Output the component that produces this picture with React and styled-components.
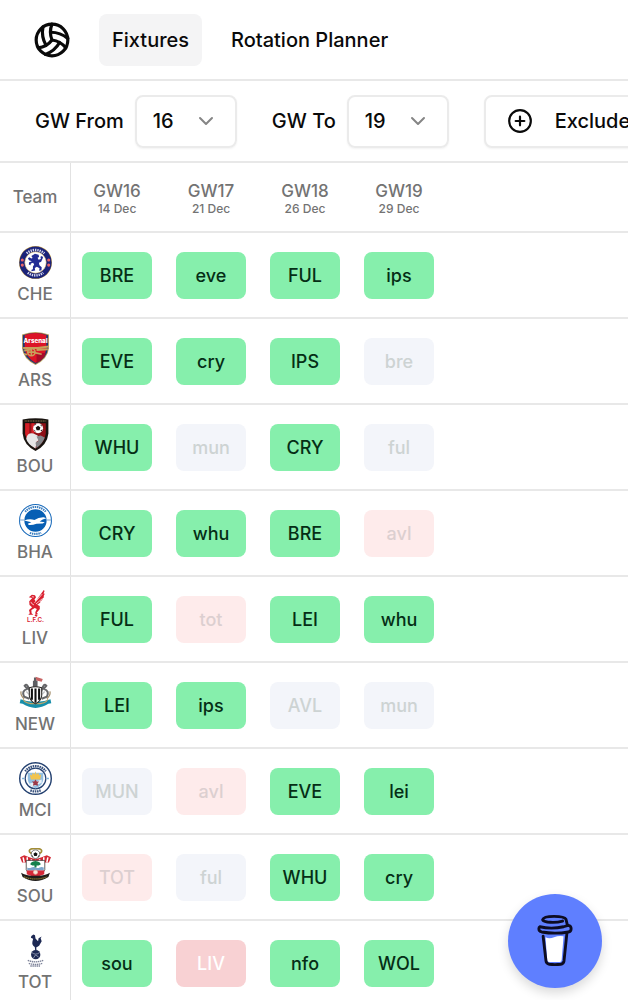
import styled, { createGlobalStyle } from "styled-components";
import { ChevronDown, CirclePlus, Volleyball } from "lucide-react";

const gameweeks = [
  { name: "GW16", date: "14 Dec" },
  { name: "GW17", date: "21 Dec" },
  { name: "GW18", date: "26 Dec" },
  { name: "GW19", date: "29 Dec" },
];

function ChelseaCrest() {
  return (
    <>
      <circle cx="16" cy="16" r="16" fill="#c9a24b" />
      <circle cx="16" cy="16" r="15.6" fill="#1b2379" />
      <circle cx="16" cy="16" r="10.4" fill="#fff" stroke="#c9a24b" strokeWidth="0.5" />
      <path
        d="M7.500 7.200a12.500 12.500 0 0 1 17 0M8.500 26a12.500 12.500 0 0 0 15 0"
        fill="none"
        stroke="#d7d9ee"
        strokeWidth="2.400"
        strokeDasharray="1.300 0.9"
      />
      <g fill="#e8656a">
        <circle cx="3.200" cy="13.500" r="1.500" />
        <circle cx="3.200" cy="18.500" r="1.500" />
        <circle cx="28.800" cy="13.500" r="1.500" />
        <circle cx="28.800" cy="18.500" r="1.500" />
      </g>
      <path
        d="M15.500 7.500l3.500 1 .5 2.200-1.500.6 1 2 2.200-.8-.4-2 1.500-.8 1 1.500-1.800 4-2.200 1 .5 2.500 2.200 1.800-.2 3-2.300.5.4-2.500-2.600-1.500-2 1.400.4 2.300-3.700.9.2-1.500 1.300-.6v-2.500l1.200-2-1-1.800-2.200.8-.4 1.700-1.600-.8.3-2.200 2.700-1-2.800-.8-1-2 1.300-1 2 1.300 1.200-.5-1.200-2z"
        fill="#222c94"
      />
    </>
  );
}

function ArsenalCrest() {
  return (
    <>
      <path d="M3 2.500Q16-2.500 29 2.500V16Q28 26 16 32 4 26 3 16z" fill="#b79755" />
      <path d="M3.800 3.200Q16-1.500 28.200 3.200V16Q27 25.500 16 31 5 25.500 3.800 16z" fill="#173a78" />
      <path d="M5.500 3Q16-1 26.500 3V16q-1 8.500-10.500 14Q6.500 24.500 5.500 16z" fill="#dc1426" />
      <path d="M17 21v9q8-4 9-10z" fill="#a80b28" />
      <text x="16" y="10.500" textAnchor="middle" fontSize="6" fontWeight="800" fill="#fff">
        Arsenal
      </text>
      <g fill="none" stroke="#c7a15b" strokeWidth="1.500">
        <path d="M4 15.500h14l11-1.500M17 17.500l11-.8M5 18l7-1" strokeWidth="2" />
        <circle cx="12" cy="19.500" r="3.600" />
        <path d="M12 16v7M8.500 19.500h7M15 20l7 1.500M5 21l3 1" />
      </g>
    </>
  );
}

function BournemouthCrest() {
  return (
    <>
      <path d="M3.500 1.500Q16-.8 28.500 1.500V15q-1 11-12.500 17Q4.500 26 3.500 15z" fill="#18130f" />
      <path d="M6 5h20v10q-1 9-10 14.500Q7 24 6 15z" fill="#8e1017" />
      <path d="M6 5h4v16q-4-3-4-6zM12 5h3v10h-3z" fill="#d32028" />
      <path d="M7 20q1-6 7-5l4 2 2 4-3 2-1 6.500Q8 25 7 20z" fill="#e6e6e7" />
      <path d="M17 18l4-1 4 2q-2 6-8 10l-1-5 3-2z" fill="#85878b" />
      <circle cx="18.500" cy="10" r="4.800" fill="#fff" />
      <path d="M18.500 7.500l2.300 1.700-.9 2.700h-2.800l-.9-2.700zM14.500 7.500l1-1.500 1.500.2zM20 6.200l2 .8.4 1.500zM22.800 11l-1 2-1-.8zM14.200 11.500l1.500.5.3 1.800z" fill="#17120f" />
      <path d="M5.500 2.900h21" stroke="#9d865b" strokeWidth="1" strokeDasharray="1 .6" />
    </>
  );
}

function BrightonCrest() {
  return (
    <>
      <circle cx="16" cy="16" r="15.500" fill="#fff" stroke="#1769ba" strokeWidth="1" />
      <circle cx="16" cy="16" r="10.800" fill="#075fb4" />
      <path
        d="M6 7.500a13.200 13.200 0 0 1 20 0M10.500 28q5.500 2 11 0"
        fill="none"
        stroke="#387dc0"
        strokeWidth="2"
        strokeDasharray="1.400 .7"
      />
      <path d="M.5 15.500h5M26.500 15.500h5" stroke="#78a4cf" />
      <path
        d="M5 16q5-2 10-.6 4-2.800 9-2.600l2.500 1-3.500 1.200-3 2 5 .8-2 1.200-6 .1q-4 1.500-7.500 1.200l-1-1.100 3.500-1.500z"
        fill="#fff"
      />
    </>
  );
}

function LiverpoolCrest() {
  return (
    <>
      <g fill="#d9202f">
        <path d="M9.500 7l3-2.500 3 .5 1 2-1.500 2.200 1.200 1.800L24 0l.8 1-1 2.500 1.200.2-1.200 2.400.6.6-2 2 .3.8-2.200 1.600.2.9-3 2.200 2.400 1.300.1 3-3 3.500 1.500 1.500H16l-.2-2 1.500-3-2-1-3.300 2 .2 3 1.700 1.500H9l1.500-1.500-.8-3 3-2.800-2.500-2.200-.3-3.500 3-3.200z" />
        <path d="M15 25l1.500-2 1.500 2-1 1z" />
      </g>
      <path
        d="M15 12.500L22.500 4M16.500 13.500l6-5M11.500 11.500q.3 2 3 3M12.500 6.500l2 .3"
        stroke="#fff"
        strokeWidth=".7"
        fill="none"
      />
      <text x="16" y="31.500" textAnchor="middle" fontSize="6" fontWeight="600" fill="#d9202f">
        L.F.C.
      </text>
    </>
  );
}

function NewcastleCrest() {
  return (
    <>
      <path d="M1.500 22.500Q16 28 30.500 22.500l.8 4-2.800.5Q16 35 3.500 27L.7 26.500z" fill="#178eaa" />
      <path d="M4 22.500q2 4.500 12 4.500t12-4.500" fill="none" stroke="#c6a666" strokeWidth="1" />
      <path d="M13.500 11V4.500h1v-3h2.500v3h1V11z" fill="#5d5e62" />
      <path d="M16 .8l7 2-1 2.800-5-1.200z" fill="#c76363" />
      <g fill="none" stroke="#66676a" strokeWidth="2">
        <path d="M10.500 15Q8 6 5.500 9.500l2.500 3q-6 2-3 7.500l5 2M21.500 15q2.500-9 5-5.500l-2.500 3q6 2 3 7.500l-5 2" />
        <path d="M7 15l3 3M25 15l-3 3" stroke="#c9cacc" strokeWidth="1.500" />
        <path d="M2 15q-1 4 3 7M30 15q1 4-3 7" stroke="#a28c68" strokeWidth="1.200" />
      </g>
      <path d="M10 11.500q6-2 12 0v8q-1 5-6 7.500-5-2.500-6-7.500z" fill="#fff" stroke="#2b2927" />
      <path d="M12.500 12v11M16 12v14M19.500 12v11" stroke="#111" strokeWidth="2" />
    </>
  );
}

function ManCityCrest() {
  return (
    <>
      <circle cx="16" cy="16" r="15.300" fill="#fff" stroke="#254271" strokeWidth="1.400" />
      <path
        d="M6 9a12.400 12.400 0 0 1 20 0M11 27.500q5 2 10 0"
        fill="none"
        stroke="#38517c"
        strokeWidth="2.200"
        strokeDasharray="1.500 .7"
      />
      <circle cx="16" cy="16" r="10" fill="#fff" stroke="#254271" strokeWidth="1.200" />
      <path d="M8.500 10.500h15V17q-.5 6-7.500 8.500Q9 23 8.500 17z" fill="#92bfe2" />
      <path d="M10 21l12-4v3l-9 4z" fill="#e8f1f8" />
      <path d="M10.500 12l2 1 .8-2.500 1.700 1.500 1-3 1 3 1.700-1.500.8 2.500 2-1-1 5h-9z" fill="#f2c44d" />
      <path d="M16 17l1.200 1.800 2.300.2-1.500 1.700.5 2.300-2.500-.8-2.500.8.500-2.300-1.500-1.700 2.300-.2z" fill="#9c3948" />
      <path d="M3 16h2M27 16h2" stroke="#7ab2dc" strokeWidth="1.500" />
    </>
  );
}

function SouthamptonCrest() {
  return (
    <>
      <ellipse cx="16" cy="3" rx="6" ry="2.600" fill="none" stroke="#a28d36" strokeWidth="1.600" />
      <circle cx="16" cy="6" r="4.200" fill="#fff" stroke="#222" strokeWidth=".6" />
      <path d="M16 4l2 1.500-.8 2.200h-2.400L14 5.500zM12 7l1.500.5.5 2zM20 7l-1.500.5-.5 2z" fill="#111" />
      <path d="M1 9l4-2 5 2 6 2 6-2 5-2 4 2-2 5H3z" fill="#d32732" />
      <path d="M4 9l1 5M8 9v4M24 9v4M28 9l-1 5M12 11v2M20 11v2" stroke="#fff" strokeWidth="1.500" />
      <path d="M7 12h18v9q-2 5-9 7-7-2-9-7z" fill="#fff" stroke="#292321" strokeWidth=".7" />
      <path d="M7.500 21.500h17v4l-8.500 3-8.500-3z" fill="#d52a39" />
      <path d="M8 19q2 1 4 0t4 0 4 0 4 0v2.500H8z" fill="#7ba5cb" />
      <path d="M11 16q0-3 5-3.500 5 .5 5 3.500l-2 1h-2v2h-2v-2h-2z" fill="#15804b" />
      <circle cx="16" cy="23.500" r="2" fill="#f8e8dc" stroke="#e8b8a8" strokeWidth=".7" />
      <path d="M2 24q4 3 14 3t14-3l-1.500 4Q16 36 3.500 28z" fill="#1f1d1b" />
      <path d="M5 28q11 4 22 0" fill="none" stroke="#8f7c33" strokeWidth="1.200" strokeDasharray="1.300 .7" />
    </>
  );
}

function SpursCrest() {
  return (
    <>
      <path d="M12 2l2-1.500 1.500.8.5 3 2.500 2.700L19 4l3-1.500L21 4l1 3-2.500 4.500-2.800 1.500.3 3h-1.300l-.4-3.500q-3-1.500-2.300-5l.7-3-2.200-.8z" fill="#1c2853" />
      <circle cx="16.200" cy="20" r="4.500" fill="#1c2853" />
      <path d="M12.500 18q3.500 3 7.500 0M14 23.300l2-3 3 2" fill="none" stroke="#aeb5ca" strokeWidth=".7" />
      <path
        d="M8.500 25.500q7.500 3 15 0M9.500 28.500q6.500 2 13 0M11 31h10"
        fill="none"
        stroke="#7c8298"
        strokeWidth="1.300"
        strokeDasharray="1.400 .6"
      />
    </>
  );
}

const teams = [
  { name: "CHE", Crest: ChelseaCrest, fixtures: ["BRE easy", "eve easy", "FUL easy", "ips easy"] },
  { name: "ARS", Crest: ArsenalCrest, fixtures: ["EVE easy", "cry easy", "IPS easy", "bre medium"] },
  { name: "BOU", Crest: BournemouthCrest, fixtures: ["WHU easy", "mun medium", "CRY easy", "ful medium"] },
  { name: "BHA", Crest: BrightonCrest, fixtures: ["CRY easy", "whu easy", "BRE easy", "avl hard"] },
  { name: "LIV", Crest: LiverpoolCrest, fixtures: ["FUL easy", "tot hard", "LEI easy", "whu easy"] },
  { name: "NEW", Crest: NewcastleCrest, fixtures: ["LEI easy", "ips easy", "AVL medium", "mun medium"] },
  { name: "MCI", Crest: ManCityCrest, fixtures: ["MUN medium", "avl hard", "EVE easy", "lei easy"] },
  { name: "SOU", Crest: SouthamptonCrest, fixtures: ["TOT hard", "ful medium", "WHU easy", "cry easy"] },
  { name: "TOT", Crest: SpursCrest, fixtures: ["sou easy", "LIV hardest", "nfo easy", "WOL easy"] },
];

const difficulty = {
  easy: { background: "#86efac", color: "#052e16" },
  medium: { background: "#f3f5fa", color: "#cdd3d3" },
  hard: { background: "#feebeb", color: "#dccfd0" },
  hardest: { background: "#f8d1d3", color: "#fff" },
};

function GameweekSelect({ id, label, value }) {
  return (
    <Field>
      <label htmlFor={id}>{label}</label>
      <SelectBox>
        <select id={id} defaultValue={value}>
          {[16, 17, 18, 19].map((gw) => (
            <option key={gw}>{gw}</option>
          ))}
        </select>
        <ChevronDown size={24} strokeWidth={2} />
      </SelectBox>
    </Field>
  );
}

function App() {
  return (
    <>
      <GlobalStyle />
      <Header>
        <Logo href="#" aria-label="Home">
          <Volleyball size={38} strokeWidth={2} />
        </Logo>
        <Nav>
          <NavLink href="#fixtures" $active>
            Fixtures
          </NavLink>
          <NavLink href="#rotation">Rotation Planner</NavLink>
        </Nav>
      </Header>
      <Toolbar>
        <GameweekSelect id="from" label="GW From" value="16" />
        <GameweekSelect id="to" label="GW To" value="19" />
        <ExcludeButton type="button">
          <CirclePlus size={26} strokeWidth={2} />
          Exclude
        </ExcludeButton>
      </Toolbar>
      <Table>
        <thead>
          <tr>
            <TeamHeading scope="col">Team</TeamHeading>
            {gameweeks.map((gw) => (
              <Gameweek key={gw.name} scope="col">
                <span>{gw.name}</span>
                <small>{gw.date}</small>
              </Gameweek>
            ))}
            <Filler />
          </tr>
        </thead>
        <tbody>
          {teams.map(({ name, Crest, fixtures }) => (
            <tr key={name}>
              <Team scope="row">
                <svg viewBox="0 0 32 32" width="33" height="33" aria-hidden="true">
                  <Crest />
                </svg>
                <span>{name}</span>
              </Team>
              {fixtures.map((fixture, i) => {
                const [opponent, level] = fixture.split(" ");
                return (
                  <Cell key={i}>
                    <Fixture $level={level}>{opponent}</Fixture>
                  </Cell>
                );
              })}
              <Filler />
            </tr>
          ))}
        </tbody>
      </Table>
      <CoffeeButton type="button" aria-label="Buy me a coffee">
        <svg viewBox="0 0 40 56" width="38" height="54" fill="none" aria-hidden="true">
          <path d="M10 24q4 2 9 0t10-1l-2 25q-.3 2-2 2H14q-2 0-2.200-2z" fill="#fff" />
          <g stroke="#0d0c22" strokeWidth="3" strokeLinecap="round" strokeLinejoin="round">
            <path d="M28 7q-7 2-16 1-5-1-5-2.500Q8 2 19 2q11 0 12.500 3l1.500 6" />
            <path d="M4 13q12 3 25 0l5-1.500q3 .5 3 3.500 0 3-3 3.500-14 2.500-28 0-3-.7-3-3.500 0-1.500 1-2z" />
            <path d="M7.500 23l3 26q.3 3 3.500 3.500 6 .8 12 0 3-.5 3.500-3.500l3-29" />
          </g>
        </svg>
      </CoffeeButton>
    </>
  );
}

const GlobalStyle = createGlobalStyle`
  * {
    box-sizing: border-box;
  }
  body {
    margin: 0;
    background: #fff;
    color: #0a0a0a;
    font-family: Inter, sans-serif;
    font-size: 20px;
    font-weight: 500;
    overflow-x: hidden;
  }
  button,
  select {
    font: inherit;
    color: inherit;
  }
`;

const Header = styled.header`
  display: flex;
  align-items: center;
  gap: 28px;
  height: 81px;
  padding: 0 33px;
  border-bottom: 2px solid #e8e8e8;
`;

const Logo = styled.a`
  display: flex;
  color: inherit;
`;

const Nav = styled.nav`
  display: flex;
  gap: 16px;
`;

const NavLink = styled.a`
  padding: 0 13px;
  border-radius: 8px;
  background: ${(props) => (props.$active ? "#f4f4f5" : "transparent")};
  color: inherit;
  line-height: 52px;
  text-decoration: none;
  white-space: nowrap;
`;

const Toolbar = styled.div`
  display: flex;
  align-items: center;
  gap: 35px;
  height: 82px;
  padding: 0 35px;
  border-bottom: 2px solid #e8e8e8;
  overflow: hidden;
`;

const Field = styled.div`
  display: flex;
  flex-shrink: 0;
  align-items: center;
  gap: 11px;
`;

const SelectBox = styled.div`
  display: grid;
  align-items: center;
  width: 102px;
  height: 53px;
  border: 2px solid #ebebeb;
  border-radius: 8px;
  box-shadow: 0 1px 2px rgba(0, 0, 0, 0.05);

  select,
  svg {
    grid-area: 1 / 1;
  }
  select {
    appearance: none;
    height: 100%;
    padding: 0 16px;
    border: none;
    background: transparent;
  }
  svg {
    justify-self: end;
    margin-right: 17px;
    color: #858585;
    pointer-events: none;
  }
`;

const ExcludeButton = styled.button`
  display: flex;
  flex-shrink: 0;
  align-items: center;
  gap: 22px;
  height: 53px;
  padding: 0 21px;
  border: 2px solid #ebebeb;
  border-radius: 8px;
  background: #fff;
  box-shadow: 0 1px 2px rgba(0, 0, 0, 0.05);
`;

const Table = styled.table`
  width: 100%;
  table-layout: fixed;
  border-collapse: separate;
  border-spacing: 0;
  color: #737373;
  font-size: 17px;
  line-height: 24px;

  th,
  td {
    padding: 0;
    border-bottom: 2px solid #e8e8e8;
    font-weight: 500;
    text-align: center;
  }
`;

const TeamHeading = styled.th`
  width: 71px;
  height: 70px;
  border-right: 1px solid #e2e2e2;
`;

const Gameweek = styled.th`
  width: 94px;

  span,
  small {
    display: block;
    margin-right: 2px;
  }
  small {
    font-size: 12px;
    line-height: 12px;
  }
`;

const Filler = styled.td`
  width: auto;
`;

const Team = styled.th`
  height: 86px;
  border-right: 1px solid #e2e2e2;

  svg {
    display: block;
    margin: 2px auto 3px;
  }
  span {
    display: block;
  }
`;

const Cell = styled.td`
  width: 94px;
`;

const Fixture = styled.div`
  width: 70px;
  margin-left: 11px;
  border-radius: 8px;
  background: ${(props) => difficulty[props.$level].background};
  color: ${(props) => difficulty[props.$level].color};
  font-size: 18px;
  line-height: 47px;
`;

const CoffeeButton = styled.button`
  position: fixed;
  right: 26px;
  bottom: 12px;
  display: grid;
  place-items: center;
  width: 94px;
  height: 94px;
  padding: 0;
  border: none;
  border-radius: 50%;
  background: #5f7fff;
  box-shadow: 0 5px 11px rgba(0, 0, 0, 0.15);
  cursor: pointer;
`;

export default App;
